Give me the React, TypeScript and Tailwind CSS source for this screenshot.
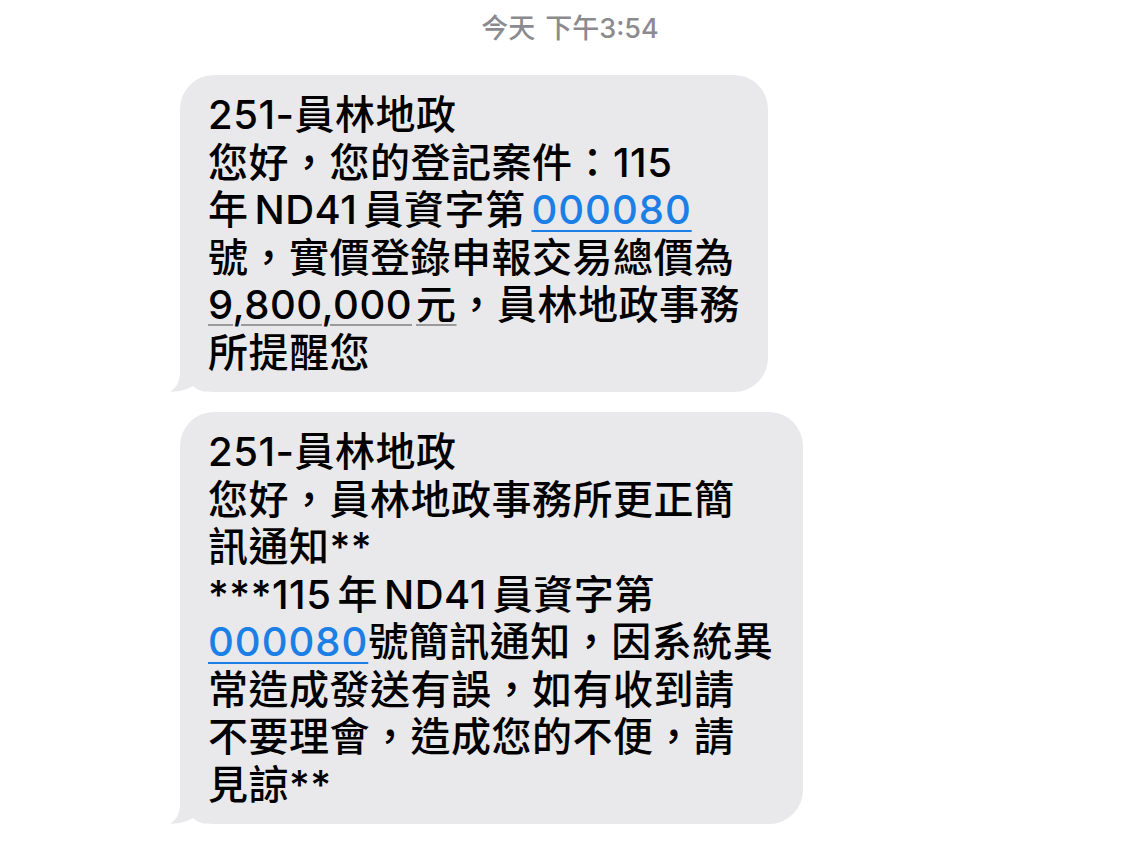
import React from "react";

const FONT = '"Inter", "Noto Sans CJK TC", "Noto Sans", sans-serif';

function Tail() {
  return (
    <svg
      className="absolute left-[-10px] bottom-0"
      width="36"
      height="36"
      viewBox="0 0 36 36"
    >
      <path
        d="M10 0 L10 16 C10 26 6 32 0 35.6 C9 36 17 33.5 23 30 C26 33 30 35 36 36 L36 0 Z"
        fill="#e9e9eb"
      />
    </svg>
  );
}

function Bubble({ width, children }: { width: string; children: React.ReactNode }) {
  return (
    <div className={`relative ${width}`}>
      <Tail />
      <div className="relative rounded-[34px] bg-[#e9e9eb] pl-[28px] pr-[20px] py-[16px] text-[40px] font-medium leading-[47.5px] tracking-[0.5px] text-black">
        {children}
      </div>
    </div>
  );
}

function Line({ children }: { children: React.ReactNode }) {
  return <div className="whitespace-nowrap">{children}</div>;
}

function Link({ children }: { children: React.ReactNode }) {
  return (
    <span className="text-[#1b7fe6] underline decoration-[#1b7fe6] decoration-2 underline-offset-[6px] tracking-[1px]">
      {children}
    </span>
  );
}

export default function App() {
  return (
    <div className="w-[1140px] h-[855px] bg-white overflow-hidden" style={{ fontFamily: FONT }}>
      <div className="h-[58px] flex items-center justify-center text-[27px] font-medium text-[#8b8b8f]">
        <span>今天</span>
        <span className="ml-[10px]">下午3:54</span>
      </div>
      <div className="mt-[17px] pl-[180px] flex flex-col gap-[20px]">
        <Bubble width="w-[588px]">
          <Line>251-員林地政</Line>
          <Line>您好，您的登記案件：115</Line>
          <Line>
            年<span className="ml-[6px]">ND41</span>
            <span className="ml-[6px]">員資字第</span>
            <span className="ml-[6px]">
              <Link>000080</Link>
            </span>
          </Line>
          <Line>號，實價登錄申報交易總價為</Line>
          <Line>
            <span className="underline decoration-[#9a9a9a] decoration-2 underline-offset-[5px]">
              9,800,000<span className="ml-[4px]">元</span>
            </span>
            ，員林地政事務
          </Line>
          <Line>所提醒您</Line>
        </Bubble>
        <Bubble width="w-[623px]">
          <Line>251-員林地政</Line>
          <Line>您好，員林地政事務所更正簡</Line>
          <Line>訊通知**</Line>
          <Line>
            ***115<span className="ml-[6px]">年</span>
            <span className="ml-[6px]">ND41</span>
            <span className="ml-[6px]">員資字第</span>
          </Line>
          <Line>
            <Link>000080</Link>號簡訊通知，因系統異
          </Line>
          <Line>常造成發送有誤，如有收到請</Line>
          <Line>不要理會，造成您的不便，請</Line>
          <Line>見諒**</Line>
        </Bubble>
      </div>
    </div>
  );
}
